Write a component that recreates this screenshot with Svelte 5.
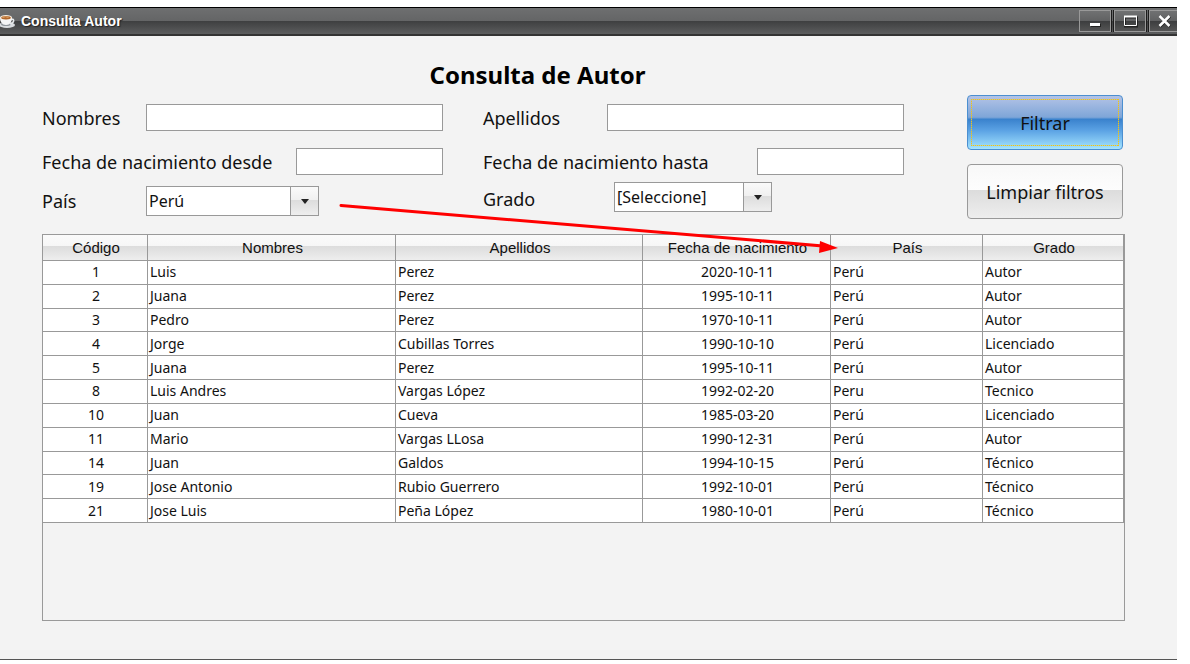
<script>
  const columns = [
    { name: 'Código', width: 105, center: true },
    { name: 'Nombres', width: 248 },
    { name: 'Apellidos', width: 247 },
    { name: 'Fecha de nacimiento', width: 188, center: true },
    { name: 'País', width: 152 },
    { name: 'Grado', width: 141 },
  ];
  const total = columns.reduce((sum, c) => sum + c.width, 0);

  const rows = [
    [1, 'Luis', 'Perez', '2020-10-11', 'Perú', 'Autor'],
    [2, 'Juana', 'Perez', '1995-10-11', 'Perú', 'Autor'],
    [3, 'Pedro', 'Perez', '1970-10-11', 'Perú', 'Autor'],
    [4, 'Jorge', 'Cubillas Torres', '1990-10-10', 'Perú', 'Licenciado'],
    [5, 'Juana', 'Perez', '1995-10-11', 'Perú', 'Autor'],
    [8, 'Luis Andres', 'Vargas López', '1992-02-20', 'Peru', 'Tecnico'],
    [10, 'Juan', 'Cueva', '1985-03-20', 'Perú', 'Licenciado'],
    [11, 'Mario', 'Vargas LLosa', '1990-12-31', 'Perú', 'Autor'],
    [14, 'Juan', 'Galdos', '1994-10-15', 'Perú', 'Técnico'],
    [19, 'Jose Antonio', 'Rubio Guerrero', '1992-10-01', 'Perú', 'Técnico'],
    [21, 'Jose Luis', 'Peña López', '1980-10-01', 'Perú', 'Técnico'],
  ];

  let country = $state('Perú');
  let degree = $state('[Seleccione]');
</script>

<div class="window">
  <header class="titlebar">
    <svg class="cup" width="16" height="16" viewBox="0 0 16 16" aria-hidden="true">
      <ellipse cx="7" cy="12" rx="8" ry="3" fill="#d9dcdf" />
      <ellipse cx="6" cy="11" rx="5" ry="2" fill="#8f969c" />
      <path d="M11 6.500c3-1.500 4.500 2.500-1 4.500" fill="none" stroke="#e6e9eb" stroke-width="1.500" />
      <path d="M0 4.500h12c0 4-2 7.500-6 7.500S0 8.500 0 4.500z" fill="#f4f5f6" />
      <ellipse cx="6" cy="4.500" rx="6" ry="2.500" fill="#f7ecdf" />
      <ellipse cx="6" cy="4.700" rx="4.800" ry="1.700" fill="#b0662c" />
      <path d="M2.500 4.500q3-1.500 6 0" fill="none" stroke="#dfa566" />
    </svg>
    <span class="caption">Consulta Autor</span>
    <div class="controls">
      <button type="button" aria-label="Minimizar">
        <svg width="30" height="20" viewBox="0 0 30 20"><path d="M11 14.500h10" stroke="#222" stroke-width="3" /><path d="M10 13.500h10" stroke="#fff" stroke-width="3" /></svg>
      </button>
      <button type="button" aria-label="Maximizar">
        <svg width="30" height="20" viewBox="0 0 30 20"><path d="M10 6.500h12v9H10z" fill="none" stroke="#222" stroke-width="2" /><path d="M9.500 5.500h12v9h-12z" fill="none" stroke="#fff" /><path d="M9 5.500h13" stroke="#fff" stroke-width="2" /></svg>
      </button>
      <button type="button" aria-label="Cerrar">
        <svg width="30" height="20" viewBox="0 0 30 20"><path d="M10 5.500l10 10M20 5.500l-10 10" stroke="#222" stroke-width="3" /><path d="M9.500 5l10 10M19.500 5l-10 10" stroke="#fff" stroke-width="2.500" /></svg>
      </button>
    </div>
  </header>

  <main>
    <h1>Consulta de Autor</h1>

    <form onsubmit={(e) => e.preventDefault()}>
      <div class="fields left">
        <div class="field">
          <label for="names">Nombres</label>
          <input id="names" class="long" type="text" />
        </div>
        <div class="field">
          <label for="from">Fecha de nacimiento desde</label>
          <input id="from" class="short" type="text" />
        </div>
        <div class="field">
          <label for="country">País</label>
          <div class="combo country">
            <select id="country" bind:value={country}>
              <option>[Seleccione]</option>
              <option>Perú</option>
            </select>
            <span class="drop"></span>
          </div>
        </div>
      </div>

      <div class="fields right">
        <div class="field">
          <label for="surnames">Apellidos</label>
          <input id="surnames" class="long" type="text" />
        </div>
        <div class="field">
          <label for="until">Fecha de nacimiento hasta</label>
          <input id="until" class="short" type="text" />
        </div>
        <div class="field">
          <label for="degree">Grado</label>
          <div class="combo degree">
            <select id="degree" bind:value={degree}>
              <option>[Seleccione]</option>
              <option>Autor</option>
              <option>Licenciado</option>
              <option>Técnico</option>
            </select>
            <span class="drop"></span>
          </div>
        </div>
      </div>

      <div class="actions">
        <button type="submit" class="primary"><span>Filtrar</span></button>
        <button type="reset"><span>Limpiar filtros</span></button>
      </div>
    </form>

    <section class="results">
      <table>
        <colgroup>
          {#each columns as column}
            <col style="width: {(column.width / total) * 100}%" />
          {/each}
        </colgroup>
        <thead>
          <tr>
            {#each columns as column}
              <th scope="col">{column.name}</th>
            {/each}
          </tr>
        </thead>
        <tbody>
          {#each rows as row}
            <tr>
              {#each row as cell, i}
                <td class:center={columns[i].center}>{cell}</td>
              {/each}
            </tr>
          {/each}
        </tbody>
      </table>
    </section>
  </main>

  <svg class="pointer" width="500" height="54" viewBox="0 0 500 54" aria-hidden="true">
    <path d="M2 5.500L484 46" stroke="#f00" stroke-width="3" stroke-linecap="round" />
    <path d="M481 41L499 48L480 53z" fill="#f00" />
  </svg>
</div>

<style>
  :global(body) {
    margin: 0;
    background: #fff;
  }

  .window {
    position: relative;
    box-sizing: border-box;
    margin: 7px 13px 0 0;
    background: #f3f3f3;
    border-bottom: 1px solid #555;
    font-family: 'Noto Sans', Tahoma, sans-serif;
    color: #111;
  }

  .titlebar {
    display: flex;
    align-items: center;
    height: 26px;
    border-top: 1px solid #000;
    border-bottom: 2px solid #333;
    background: linear-gradient(#6e6f70 0, #646566 50%, #3e3f40 50%, #5c5d5e 100%);
  }

  .caption {
    flex: 1;
    margin-left: 5px;
    font: bold 14px/16px 'Liberation Sans', Arial, sans-serif;
    color: #fff;
    text-shadow: 1px 1px 1px #222;
  }

  .controls {
    display: flex;
    gap: 3px;
    overflow: hidden;
    width: 98px;
  }

  .controls button {
    flex: none;
    display: flex;
    padding: 0;
    border: 1px solid #999;
    outline: 1px solid #1c1c1c;
    background: linear-gradient(#707172 0, #606162 50%, #3c3d3e 50%, #555 100%);
  }

  main {
    padding: 24px 52px 38px 42px;
  }

  h1 {
    margin: 0 92px 14px 0;
    font-size: 24px;
    line-height: 29px;
    text-align: center;
    color: #000;
  }

  form {
    display: grid;
    grid-template-columns: 401fr 421fr 179px;
    column-gap: 40px;
    margin-right: 2px;
  }

  .fields {
    padding-top: 1px;
  }

  .field {
    display: flex;
    align-items: center;
    justify-content: space-between;
    font-size: 18px;
    line-height: 26px;
    white-space: nowrap;
  }

  .field + .field {
    margin-top: 17px;
  }

  .left .field:last-child {
    margin-top: 11px;
  }

  .right .field:last-child {
    margin-top: 7px;
    align-items: flex-end;
  }

  input,
  select {
    box-sizing: border-box;
    border: 1px solid #999;
    border-radius: 0;
    background: #fff;
    font: inherit;
  }

  input {
    height: 27px;
    padding: 0 4px;
  }

  .long {
    width: 297px;
  }

  .short {
    width: 147px;
  }

  .combo {
    display: grid;
    grid-template-columns: 1fr 29px;
    height: 30px;
    font-size: 16px;
  }

  .country {
    width: 173px;
    margin-right: 124px;
  }

  .degree {
    width: 158px;
    margin-right: 132px;
  }

  select {
    grid-area: 1 / 1 / 2 / 3;
    appearance: none;
    height: 30px;
    padding: 0 2px;
    color: #111;
  }

  .drop {
    grid-area: 1 / 2;
    display: grid;
    place-items: center;
    box-sizing: border-box;
    border: 1px solid #999;
    background: linear-gradient(#fafafa 0, #f0f0f0 45%, #dcdcdc 45%, #eee 100%);
    pointer-events: none;
    z-index: 1;
  }

  .drop::before {
    content: '';
    border: 4px solid transparent;
    border-top: 5px solid #222;
    border-bottom: 0;
  }

  .actions {
    display: grid;
    gap: 14px;
    align-content: start;
    margin: -8px 0 15px;
    padding-left: 23px;
  }

  .actions button {
    height: 55px;
    padding: 3px;
    border: 1px solid #999;
    border-radius: 4px;
    background: linear-gradient(#f8f8f8 0, #fdfdfd 47%, #dcdcdc 47%, #eee 100%);
    font: inherit;
    font-size: 18px;
    color: #111;
  }

  .actions span {
    display: grid;
    place-items: center;
    height: 100%;
    box-sizing: border-box;
  }

  .actions .primary {
    border-color: #4b8fd0;
    background: linear-gradient(#b4c3e6 0, #7fa6d8 40%, #3a82cd 44%, #5ba2e4 65%, #a4e4ff 100%);
  }

  .primary span {
    --dot: #f0c419 0 1px, #f0c41955 1px 2px;
    background:
      repeating-linear-gradient(90deg, var(--dot)) top / 100% 1px no-repeat,
      repeating-linear-gradient(90deg, var(--dot)) bottom / 100% 1px no-repeat,
      repeating-linear-gradient(var(--dot)) left / 1px 100% no-repeat,
      repeating-linear-gradient(var(--dot)) right / 1px 100% no-repeat;
  }

  .results {
    box-sizing: border-box;
    min-height: 387px;
    border: 1px solid #999;
  }

  table {
    width: 100%;
    height: 288px;
    border-collapse: separate;
    border-spacing: 0;
    table-layout: fixed;
  }

  th,
  td {
    box-sizing: border-box;
    border-right: 1px solid #999;
    border-bottom: 1px solid #999;
    overflow: hidden;
    white-space: nowrap;
  }

  th {
    height: 26px;
    padding: 0 0 0 2px;
    background: linear-gradient(#fafafa 0, #f6f6f6 45%, #dcdcdc 45%, #eee 100%);
    font: 15px/25px 'Liberation Sans', Arial, sans-serif;
  }

  td {
    padding: 0 0 0 2px;
    background: #fff;
    font-size: 14px;
    line-height: 22px;
  }

  .center {
    text-align: center;
  }

  .pointer {
    position: absolute;
    left: 339px;
    top: 193px;
    pointer-events: none;
    z-index: 2;
  }
</style>
